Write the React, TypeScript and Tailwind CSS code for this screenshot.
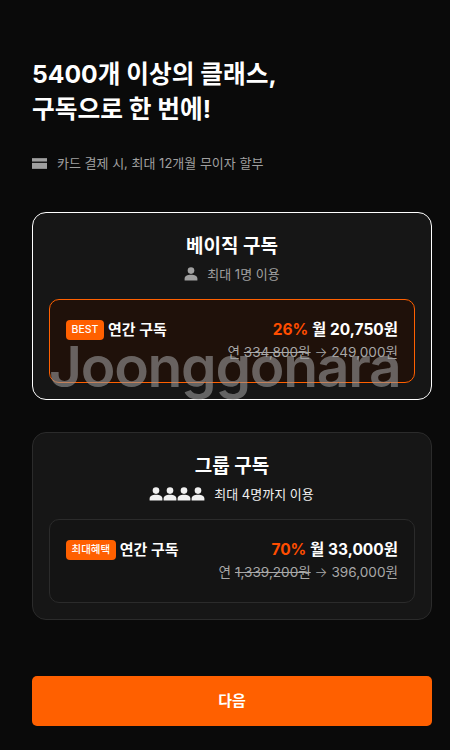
const PersonIcon = ({ className }: { className: string }) => (
  <svg viewBox="0 0 14 14" className={className} fill="currentColor">
    <circle cx="7" cy="3.6" r="3.3" />
    <path d="M0.6 13.5v-1.7c0-2.6 2.6-4 6.4-4s6.4 1.4 6.4 4v1.7z" />
  </svg>
);

const PlanOption = ({
  active,
  badge,
  percent,
  monthly,
  before,
  after,
}: {
  active: boolean;
  badge: string;
  percent: string;
  monthly: string;
  before: string;
  after: string;
}) => (
  <div
    className={`h-[84px] rounded-[10px] border px-4 pt-[16px] ${
      active ? 'border-[#ff6000] bg-[#1f110a]' : 'border-[#2b2b2b] bg-[#141414]'
    }`}
  >
    <div className="flex items-center justify-between h-[28px]">
      <div className="flex items-center gap-1">
        <span className="h-5 rounded-[4px] bg-[#ff6000] px-[5.5px] text-[10.5px] leading-5 font-medium text-white">
          {badge}
        </span>
        <span className="text-[15px] font-semibold text-white">연간 구독</span>
      </div>
      <div className="text-[15.5px] font-bold text-white">
        <span className="text-[#ff4d00]">{percent}</span> 월 {monthly}
      </div>
    </div>
    <div className="-mt-[2px] text-right text-[13.6px] leading-5 text-[#a8a8a8]">
      연 <span className="line-through">{before}</span>{' '}
      <span className="font-light">→</span> {after}
    </div>
  </div>
);

const App = () => {
  return (
    <div
      className="relative h-[750px] w-[450px] overflow-hidden bg-[#0a0a0a] pl-8 pr-[18px] pt-[57px]"
      style={{ fontFamily: 'Inter, "Noto Sans CJK KR", sans-serif' }}
    >
      <h1 className="text-[24.7px] leading-[35px] font-bold text-white">
        5400개 이상의 클래스,
        <br />
        구독으로 한 번에!
      </h1>

      <div className="mt-[26px] flex items-center gap-[10px] text-[13px] leading-5 text-[#a0a0a0]">
        <svg viewBox="0 0 14 10" className="w-[15px] h-[11px]" fill="currentColor">
          <rect x="0" y="0" width="14" height="3.2" />
          <rect x="0" y="4.4" width="14" height="5.6" />
        </svg>
        <span>카드 결제 시, 최대 12개월 무이자 할부</span>
      </div>

      {/* 베이직 */}
      <div className="mt-[39px] h-[188px] rounded-[14px] border border-white bg-[#161616] px-4 pt-[20px]">
        <div className="text-center text-[19px] leading-[28px] font-bold text-white">베이직 구독</div>
        <div className="mt-[3px] flex items-center justify-center gap-[9px] text-[13px] leading-5 text-[#a0a0a0]">
          <PersonIcon className="w-[14px] h-[14px]" />
          <span>최대 1명 이용</span>
        </div>
        <div className="mt-[15px]">
          <PlanOption active badge="BEST" percent="26%" monthly="20,750원" before="334,800원" after="249,000원" />
        </div>
      </div>

      {/* 그룹 */}
      <div className="mt-[32px] h-[188px] rounded-[14px] border border-[#2b2b2b] bg-[#161616] px-4 pt-[20px]">
        <div className="text-center text-[19px] leading-[28px] font-bold text-white">그룹 구독</div>
        <div className="mt-[3px] flex items-center justify-center gap-[9px] text-[13px] leading-5 text-[#f0f0f0]">
          <div className="flex -ml-[1px]">
            <PersonIcon className="w-[14px] h-[14px]" />
            <PersonIcon className="w-[14px] h-[14px]" />
            <PersonIcon className="w-[14px] h-[14px]" />
            <PersonIcon className="w-[14px] h-[14px]" />
          </div>
          <span>최대 4명까지 이용</span>
        </div>
        <div className="mt-[15px]">
          <PlanOption active={false} badge="최대혜택" percent="70%" monthly="33,000원" before="1,339,200원" after="396,000원" />
        </div>
      </div>

      <button className="mt-[56px] h-[50px] w-[400px] rounded-[5px] bg-[#ff6000] text-[15px] font-bold text-white">
        다음
      </button>

      {/* watermark */}
      <div className="absolute left-[49px] top-[327px] text-[57px] leading-[80px] font-semibold tracking-[-1.3px] text-[#9a9a9a]/60">
        Joonggonara
      </div>
    </div>
  );
};

export default App;
